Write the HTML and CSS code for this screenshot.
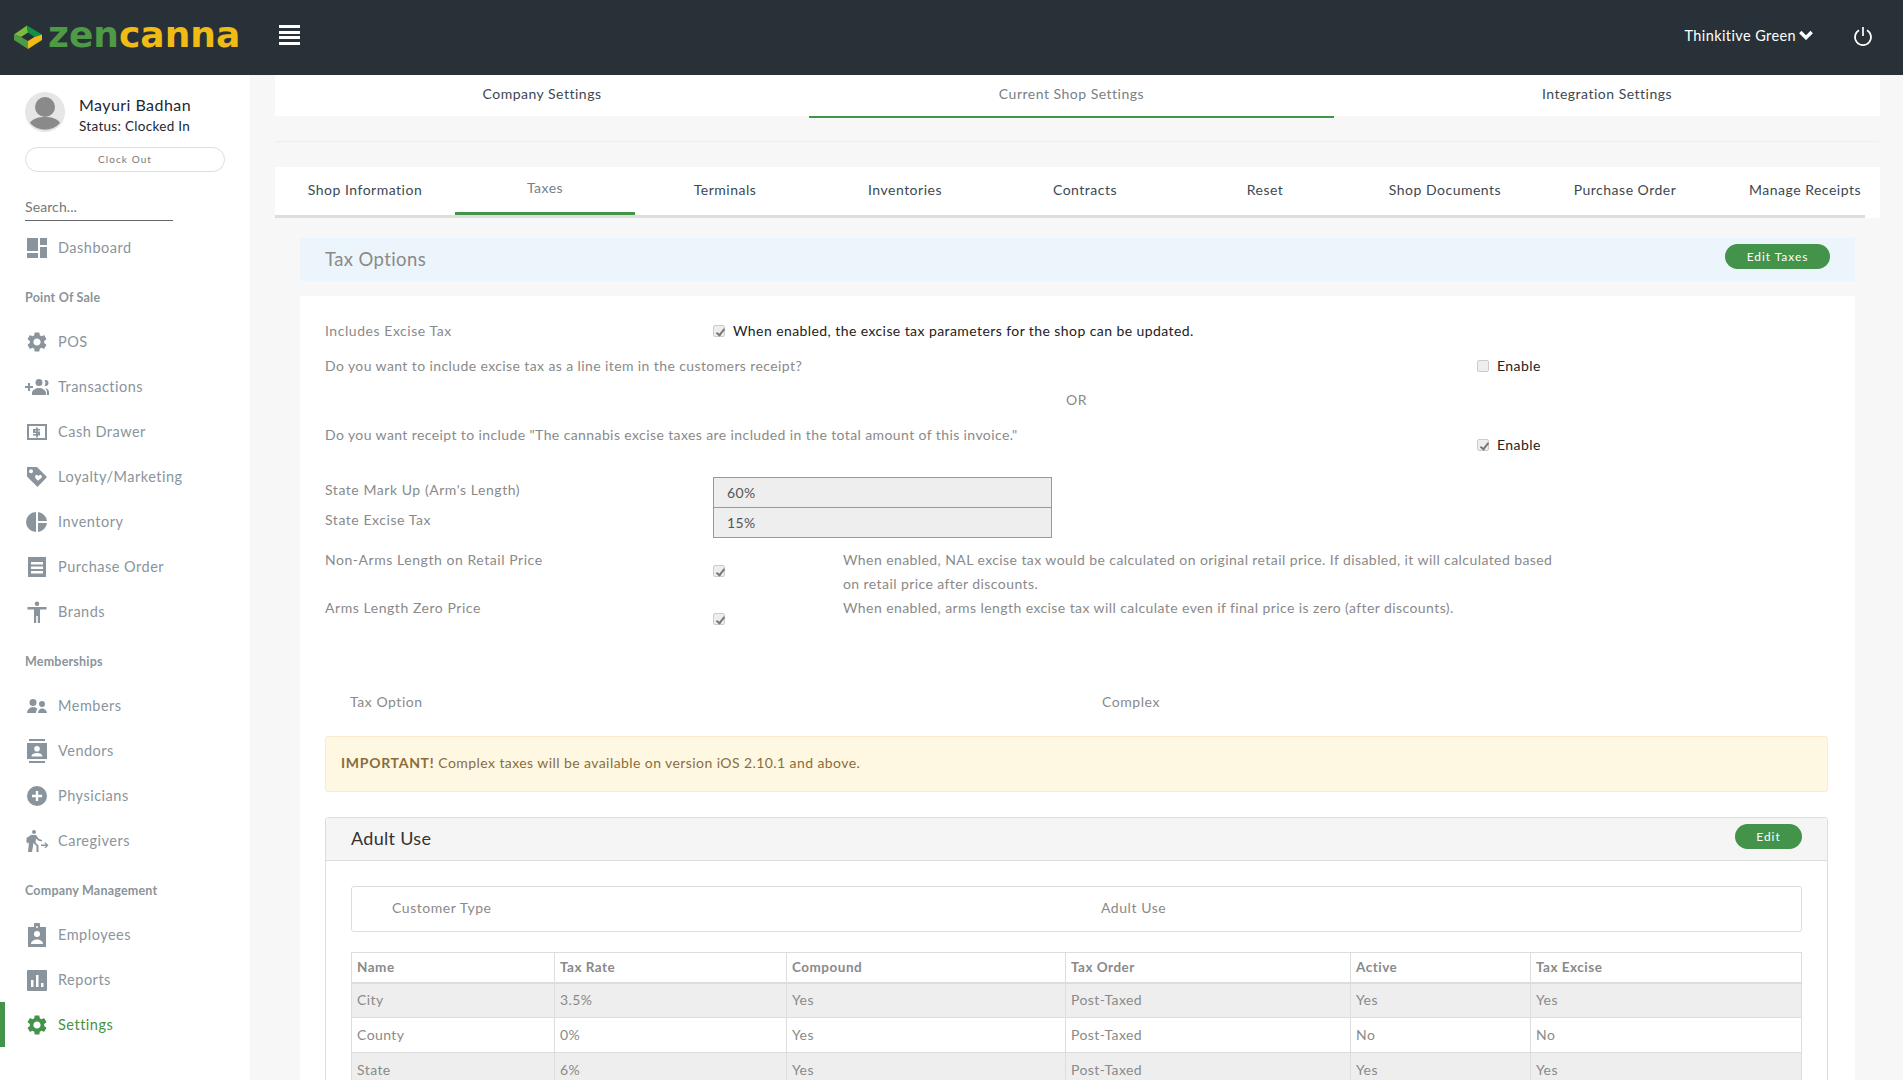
FILE: index.html
```html
<!DOCTYPE html>
<html lang="en">
<head>
<meta charset="utf-8">
<title>Zencanna - Tax Options</title>
<link rel="stylesheet" href="styles.css">
</head>
<body>
<header class="topbar">
  <div class="logo">
    <svg class="logo-mark" viewBox="0 0 28 24"><path fill="#7dbb3c" d="M0 9.500 13 .5 14 7.500 7 12z"/><path fill="#0f9148" d="M13 .5 28 9.500 20.500 12 14 7.500z"/><path fill="#efbc16" d="M28 9.500V15L14 24v-8l6.500-4z"/><path fill="#4f9a45" d="M0 9.500V15l14 9v-8l-7-4z"/></svg>
    <span class="logo-text"><span class="logo-zen">zen</span><span class="logo-canna">canna</span></span>
  </div>
  <div class="burger"><span></span><span></span><span></span><span></span></div>
  <div class="topbar-right">
    <span class="shop-name">Thinkitive Green</span>
    <svg class="chev" viewBox="0 0 14 10"><path d="M1.300 2 7 7.700 12.700 2" fill="none" stroke="#fff" stroke-width="3.400"/></svg>
    <svg class="power" viewBox="0 0 20 20"><path d="M6 4.200a8 8 0 1 0 8 0" fill="none" stroke="#fff" stroke-width="1.700"/><path d="M10 1v9" stroke="#fff" stroke-width="1.700"/></svg>
  </div>
</header>
<div class="shell">
  <aside class="sidebar">
    <div class="user">
      <svg class="avatar" viewBox="0 0 40 40"><circle cx="20" cy="20" r="20" fill="#e6e6e6"/><circle cx="20" cy="15" r="10" fill="#8a8a8a"/><path d="M5 31c3-5 9-6 15-6s12 1 15 6a20 20 0 0 1-30 0z" fill="#8a8a8a"/></svg>
      <div>
        <div class="user-name">Mayuri Badhan</div>
        <div class="user-status">Status: Clocked In</div>
      </div>
    </div>
    <button class="clock">Clock Out</button>
    <div class="search">Search...</div>
    <nav class="nav">
      <a class="nav-item"><svg class="ic" viewBox="0 0 24 24"><path d="M2 2h11v13H2zM15 2h7v7h-7zM15 11h7v11h-7zM2 17h11v5H2z"/></svg>Dashboard</a>
      <div class="nav-head">Point Of Sale</div>
      <a class="nav-item"><svg class="ic" viewBox="0 0 24 24"><path d="M19.14 12.94c.04-.3.06-.61.06-.94 0-.32-.02-.64-.07-.94l2.03-1.58c.18-.14.23-.41.12-.61l-1.92-3.32c-.12-.22-.37-.29-.59-.22l-2.39.96c-.5-.38-1.03-.7-1.62-.94l-.36-2.54c-.04-.24-.24-.41-.48-.41h-3.84c-.24 0-.43.17-.47.41l-.36 2.54c-.59.24-1.13.57-1.62.94l-2.39-.96c-.22-.08-.47 0-.59.22L2.74 8.87c-.12.21-.08.47.12.61l2.03 1.58c-.05.3-.09.63-.09.94s.02.64.07.94l-2.03 1.58c-.18.14-.23.41-.12.61l1.92 3.32c.12.22.37.29.59.22l2.39-.96c.5.38 1.03.7 1.62.94l.36 2.54c.05.24.24.41.48.41h3.84c.24 0 .44-.17.47-.41l.36-2.54c.59-.24 1.13-.56 1.62-.94l2.39.96c.22.08.47 0 .59-.22l1.92-3.32c.12-.22.07-.47-.12-.61l-2.01-1.58zM12 15.6c-1.98 0-3.6-1.62-3.6-3.6s1.62-3.6 3.6-3.6 3.6 1.62 3.6 3.6-1.62 3.6-3.6 3.6z"/></svg>POS</a>
      <a class="nav-item"><svg class="ic" viewBox="0 0 24 24"><path d="M0 11h3V8h2v3h3v2H5v3H3v-3H0zM14 4a3.500 3.500 0 1 1 0 7 3.500 3.500 0 0 1 0-7zM20.500 5a3 3 0 0 1 0 6l-1-.2a5 5 0 0 0 0-5.600zM7 18c0-3 4-5 7-5s7 2 7 5v2H7zM20 13c2 .3 4 1.800 4 4v3h-2v-3c0-1.500-1-3-2-4z"/></svg>Transactions</a>
      <a class="nav-item"><svg class="ic" viewBox="0 0 24 24"><path fill-rule="evenodd" d="M2 4h20v16H2zm2 2v12h16V6z"/><path d="M8 9h7v1.600h-5v1h5v4H8v-1.600h5v-1H8zM11 7.500h1.800v10H11z"/></svg>Cash Drawer</a>
      <a class="nav-item"><svg class="ic" viewBox="0 0 24 24"><path fill-rule="evenodd" d="M2 2h10l10 10-9.500 10L2 11.500zm4 2.300a2 2 0 1 0 0 4 2 2 0 0 0 0-4zM13 10.500c-1-1-3-.3-3 1.300 0 1 1 2 3 4 2-2 4-3 4-4 0-1.600-2-2.300-3-1.300l-.5.500z"/></svg>Loyalty/Marketing</a>
      <a class="nav-item"><svg class="ic" viewBox="0 0 24 24"><path d="M11 2v20a10 10 0 0 1 0-20zM13 2a10 10 0 0 1 9 9h-9zM13 13h9a10 10 0 0 1-9 9z"/></svg>Inventory</a>
      <a class="nav-item"><svg class="ic" viewBox="0 0 24 24"><path fill-rule="evenodd" d="M3 2h18v20H3zm3 5v2.500h12V7zm0 4.500V14h12v-2.500zm0 4.500v2.500h12V16z"/></svg>Purchase Order</a>
      <a class="nav-item"><svg class="ic" viewBox="0 0 24 24"><path d="M12 1.500a2.300 2.300 0 1 1 0 4.600 2.300 2.300 0 0 1 0-4.600zM2.500 7h19v2.500H15V23h-2.200v-7h-1.600v7H9V9.500H2.500z"/></svg>Brands</a>
      <div class="nav-head">Memberships</div>
      <a class="nav-item"><svg class="ic" viewBox="0 0 24 24"><path d="M8 5a3.500 3.500 0 1 1 0 7 3.500 3.500 0 0 1 0-7zM17 7a3 3 0 1 1 0 6 3 3 0 0 1 0-6zM2 19c0-3 3-6 6-6 2 0 3.500.8 4.500 2-1 1-1.500 2.500-1.500 4zM13 19c0-2.500 2-4.500 4-4.500s5 2 5 4.500z"/></svg>Members</a>
      <a class="nav-item"><svg class="ic" viewBox="0 0 24 24"><path d="M4 0h16v2H4zM4 22h16v2H4z"/><path fill-rule="evenodd" d="M2 4h20v16H2zm10 3a2.800 2.800 0 1 0 0 5.600A2.800 2.800 0 0 0 12 7zM6.500 17.500h11c0-2.500-3-3.500-5.500-3.500s-5.500 1-5.500 3.500z"/></svg>Vendors</a>
      <a class="nav-item"><svg class="ic" viewBox="0 0 24 24"><path fill-rule="evenodd" d="M12 2a10 10 0 1 1 0 20 10 10 0 0 1 0-20zm-1.200 5v3.800H7v2.400h3.800V17h2.400v-3.800H17v-2.400h-3.800V7z"/></svg>Physicians</a>
      <a class="nav-item"><svg class="ic" viewBox="0 0 24 24"><path d="M9 1a2 2 0 1 1 0 4 2 2 0 0 1 0-4zM6 6h5l3 4 3 1v1.600l-4-1-2-2-.5 4 3 3V23h-2v-6l-3-3-1.500 9H3l1-10-1 1.500-1.500-1V9zM16 15.500h5l-1.500-1.500 1-.8 3 3-3 3-1-.8 1.500-1.500h-5z"/></svg>Caregivers</a>
      <div class="nav-head">Company Management</div>
      <a class="nav-item"><svg class="ic" viewBox="0 0 24 24"><path fill-rule="evenodd" d="M3 4h6V2a3 3 0 0 1 6 0v2h6v20H3zm9 1a1 1 0 0 1 0-2 1 1 0 0 1 0 2zm0 3a3 3 0 1 0 0 6 3 3 0 0 0 0-6zM6 21h12c0-3-3-4.500-6-4.500S6 18 6 21z"/></svg>Employees</a>
      <a class="nav-item"><svg class="ic" viewBox="0 0 24 24"><path fill-rule="evenodd" d="M3 2h18a1 1 0 0 1 1 1v19a1 1 0 0 1-1 1H3a1 1 0 0 1-1-1V3a1 1 0 0 1 1-1zm3 10v7h2.500v-7zm5-5v12h2.500V7zm5 8v4h2.500v-4z"/></svg>Reports</a>
      <a class="nav-item is-active"><svg class="ic" viewBox="0 0 24 24"><path d="M19.14 12.94c.04-.3.06-.61.06-.94 0-.32-.02-.64-.07-.94l2.03-1.58c.18-.14.23-.41.12-.61l-1.92-3.32c-.12-.22-.37-.29-.59-.22l-2.39.96c-.5-.38-1.03-.7-1.62-.94l-.36-2.54c-.04-.24-.24-.41-.48-.41h-3.84c-.24 0-.43.17-.47.41l-.36 2.54c-.59.24-1.13.57-1.62.94l-2.39-.96c-.22-.08-.47 0-.59.22L2.74 8.87c-.12.21-.08.47.12.61l2.03 1.58c-.05.3-.09.63-.09.94s.02.64.07.94l-2.03 1.58c-.18.14-.23.41-.12.61l1.92 3.32c.12.22.37.29.59.22l2.39-.96c.5.38 1.03.7 1.62.94l.36 2.54c.05.24.24.41.48.41h3.84c.24 0 .44-.17.47-.41l.36-2.54c.59-.24 1.13-.56 1.62-.94l2.39.96c.22.08.47 0 .59-.22l1.92-3.32c.12-.22.07-.47-.12-.61l-2.01-1.58zM12 15.6c-1.98 0-3.6-1.62-3.6-3.6s1.62-3.6 3.6-3.6 3.6 1.62 3.6 3.6-1.62 3.6-3.6 3.6z"/></svg>Settings</a>
    </nav>
  </aside>
  <main class="main">
    <div class="top-tabs">
      <a class="top-tab">Company Settings</a>
      <a class="top-tab is-active">Current Shop Settings</a>
      <a class="top-tab">Integration Settings</a>
    </div>
    <hr class="divider">
    <div class="sub-wrap">
      <div class="sub-tabs">
        <a class="sub-tab">Shop Information</a>
        <a class="sub-tab is-active">Taxes</a>
        <a class="sub-tab">Terminals</a>
        <a class="sub-tab">Inventories</a>
        <a class="sub-tab">Contracts</a>
        <a class="sub-tab">Reset</a>
        <a class="sub-tab">Shop Documents</a>
        <a class="sub-tab">Purchase Order</a>
        <a class="sub-tab">Manage Receipts</a>
      </div>
    </div>
    <section class="section">
      <div class="section-head">
        <h2 class="section-title">Tax Options</h2>
        <button class="pill pill-wide">Edit Taxes</button>
      </div>
      <div class="card">
        <div class="row row-excise">
          <span class="lbl">Includes Excise Tax</span>
          <span class="check-line"><span class="cb is-on"></span><span class="dark">When enabled, the excise tax parameters for the shop can be updated.</span></span>
        </div>
        <div class="row row-q1">
          <span class="lbl">Do you want to include excise tax as a line item in the customers receipt?</span>
          <span class="enable"><span class="cb"></span><span class="dark-2">Enable</span></span>
        </div>
        <div class="or">OR</div>
        <div class="row row-q2">
          <span class="lbl">Do you want receipt to include "The cannabis excise taxes are included in the total amount of this invoice."</span>
          <span class="enable enable-low"><span class="cb is-on"></span><span class="dark-2">Enable</span></span>
        </div>
        <div class="row row-input">
          <span class="lbl">State Mark Up (Arm's Length)</span>
          <div class="fake-input">60%</div>
        </div>
        <div class="row row-input">
          <span class="lbl">State Excise Tax</span>
          <div class="fake-input">15%</div>
        </div>
        <div class="row row-desc row-nal">
          <span class="lbl">Non-Arms Length on Retail Price</span>
          <span class="cb-cell"><span class="cb is-on"></span></span>
          <p class="desc">When enabled, NAL excise tax would be calculated on original retail price. If disabled, it will calculated based on retail price after discounts.</p>
        </div>
        <div class="row row-desc">
          <span class="lbl">Arms Length Zero Price</span>
          <span class="cb-cell"><span class="cb is-on"></span></span>
          <p class="desc">When enabled, arms length excise tax will calculate even if final price is zero (after discounts).</p>
        </div>
        <div class="option-row">
          <span class="lbl">Tax Option</span>
          <span class="lbl">Complex</span>
        </div>
        <div class="alert"><strong class="alert-strong">IMPORTANT!</strong> Complex taxes will be available on version iOS 2.10.1 and above.</div>
        <div class="panel">
          <div class="panel-head">
            <h3 class="panel-title">Adult Use</h3>
            <button class="pill">Edit</button>
          </div>
          <div class="panel-body">
            <div class="type-box">
              <span class="lbl">Customer Type</span>
              <span class="lbl">Adult Use</span>
            </div>
            <table class="tax-table">
              <colgroup><col class="c1"><col class="c2"><col class="c3"><col class="c4"><col class="c5"><col class="c6"></colgroup>
              <thead><tr><th>Name</th><th>Tax Rate</th><th>Compound</th><th>Tax Order</th><th>Active</th><th>Tax Excise</th></tr></thead>
              <tbody>
                <tr><td>City</td><td>3.5%</td><td>Yes</td><td>Post-Taxed</td><td>Yes</td><td>Yes</td></tr>
                <tr><td>County</td><td>0%</td><td>Yes</td><td>Post-Taxed</td><td>No</td><td>No</td></tr>
                <tr><td>State</td><td>6%</td><td>Yes</td><td>Post-Taxed</td><td>Yes</td><td>Yes</td></tr>
              </tbody>
            </table>
          </div>
        </div>
      </div>
    </section>
  </main>
</div>
</body>
</html>
```

FILE: styles.css
```css
* { box-sizing: border-box; }
html, body { margin: 0; height: 100%; overflow: hidden; }
body { font-family: Lato, "Liberation Sans", sans-serif; font-size: 14px; color: #8a8a8a; background: #f7f7f7; letter-spacing: .42px; }

.topbar { height: 75px; background: #293138; display: flex; align-items: center; padding: 0 30px 0 14px; }
.logo { display: flex; align-items: center; width: 265px; }
.logo-mark { width: 28px; height: 24px; margin-right: 6px; margin-top: -1px; }
.logo-text { font-family: "DejaVu Sans", sans-serif; font-weight: 700; font-size: 36px; letter-spacing: 0; line-height: 1; margin-top: -6px; }
.logo-zen { color: #4f9a45; }
.logo-canna { color: #efbc16; }
.burger { display: flex; flex-direction: column; gap: 2.600px; width: 21px; margin-top: -5px; }
.burger span { display: block; height: 3px; background: #fff; }
.topbar-right { margin-left: auto; display: flex; align-items: center; color: #fff; margin-top: -5px; }
.shop-name { font-size: 14.500px; letter-spacing: .4px; }
.chev { width: 14px; height: 10px; margin-left: 3px; margin-right: 40px; }
.power { width: 20px; height: 20px; margin-top: 2px; }

.shell { display: grid; grid-template-columns: 250px 1fr; height: 1005px; }
.sidebar { background: #fff; padding: 17px 0 0; }
.user { display: flex; padding-left: 25px; gap: 14px; }
.avatar { width: 40px; height: 40px; flex: none; }
.user-name { font-size: 16px; color: #1c2733; line-height: 20px; margin-top: 3px; letter-spacing: .45px; }
.user-status { font-size: 13.500px; color: #1c2733; line-height: 20px; margin-top: 1px; letter-spacing: .3px; }
.clock { display: block; margin: 11px 0 0 25px; width: 200px; height: 25px; background: #fff; border: 1px solid #ddd; border-radius: 13px; font: 10px Lato, sans-serif; letter-spacing: 1.100px; color: #777; padding: 0 0 2px; }
.search { margin: 20px 0 0 25px; width: 148px; height: 29px; border-bottom: 1px solid #666; color: #777; font-size: 14px; line-height: 29px; letter-spacing: .1px; }

.nav { margin-top: 4px; }
.nav-item { display: flex; align-items: center; height: 45px; padding-left: 25px; color: #8a949c; font-size: 14.500px; letter-spacing: .5px; position: relative; }
.ic { width: 24px; height: 24px; fill: #8a949c; margin-right: 9px; flex: none; }
.nav-head { height: 20px; line-height: 20px; margin: 18px 0 11px 25px; font-size: 12.500px; font-weight: 700; color: #8a949c; letter-spacing: .2px; }
.nav-item.is-active { color: #43934a; }
.nav-item.is-active .ic { fill: #43934a; }
.nav-item.is-active::before { content: ""; position: absolute; left: 0; top: 0; bottom: 0; width: 5px; background: #43934a; }

.main { padding: 0 23px 0 25px; min-width: 0; overflow: hidden; }
.top-tabs { display: grid; grid-template-columns: 534px 525px 1fr; height: 41px; background: #fff; }
.top-tab { display: block; text-align: center; color: #3c4852; font-size: 14px; line-height: 37px; letter-spacing: .5px; }
.top-tab.is-active { border-bottom: 2px solid #43934a; height: 43px; color: #777f88; }
.divider { border: 0; border-top: 1px solid #eee; margin: 25px 2px 25px 0; }
.sub-wrap { background: #fff; height: 51px; }
.sub-tabs { display: flex; width: 1590px; height: 51px; overflow: hidden; border-bottom: 3px solid #ddd; }
.sub-tab { flex: 0 0 180px; text-align: center; color: #3c4852; font-size: 14px; line-height: 46px; letter-spacing: .5px; height: 48px; }
.sub-tab.is-active { line-height: 42px; border-bottom: 3px solid #43934a; color: #777f88; }

.section { margin: 20px 25px 0; }
.section-head { display: flex; align-items: center; justify-content: space-between; height: 43px; background: #edf5fc; padding: 0 25px; }
.section-title { margin: -2px 0 0; font-size: 18.500px; font-weight: 400; color: #8a8a8a; letter-spacing: .4px; }
.pill { border: 0; background: #43934a; color: #fff; border-radius: 13px; height: 25px; width: 67px; font: 12px Lato, sans-serif; letter-spacing: .95px; padding: 0; }
.pill-wide { width: 105px; margin-top: -6px; }
.card { background: #fff; margin-top: 15px; padding: 17px 27px 0 25px; height: 800px; }

.row { display: flex; align-items: flex-start; }
.lbl { color: #8a8a8a; letter-spacing: .55px; }
.row > .lbl { flex: none; width: 388px; }
.row-excise { height: 35px; line-height: 35px; }
.check-line { display: flex; align-items: center; height: 35px; }
.cb { display: inline-block; width: 12px; height: 12px; border: 1px solid #ccc; border-radius: 2px; background: #eee; flex: none; position: relative; }
.cb.is-on::after { content: ""; position: absolute; left: 3.500px; top: 1px; width: 3px; height: 7px; border: solid #777; border-width: 0 2px 2px 0; transform: rotate(38deg); }
.dark { color: #222; margin-left: 8px; }
.dark-2 { color: #222; margin-left: 8px; }
.row-q1 { height: 35px; line-height: 35px; }
.row-q1 > .lbl, .row-q2 > .lbl { width: 1152px; letter-spacing: .4px; }
.enable { display: flex; align-items: center; height: 35px; }
.enable-low { margin-top: 10px; }
.or { height: 34px; line-height: 34px; text-align: center; color: #8a8a8a; }
.row-q2 { height: 60px; line-height: 35px; }
.row-input { height: 30px; line-height: 26px; }
.fake-input { width: 339px; height: 31px; background: #eee; border: 1px solid #999; padding-left: 13px; line-height: 29px; color: #555; margin-bottom: -1px; }
.row-desc { line-height: 24px; height: 48px; }
.row-nal { margin-top: 11px; }
.row-desc + .row-desc { height: 24px; }
.cb-cell { width: 130px; flex: none; padding-top: 5px; display: flex; align-items: center; height: 24px; margin-top: 8px; }
.desc { margin: 0; width: 720px; }
.option-row { display: grid; grid-template-columns: 25px 752px 1fr; margin-top: 70px; height: 24px; line-height: 24px; }
.option-row .lbl:first-child { grid-column: 2; }
.alert { margin-top: 22px; height: 56px; line-height: 52px; background: #fef8e3; border: 1px solid #faebcc; border-radius: 3px; padding-left: 15px; color: #8a6d3b; }
.alert-strong { letter-spacing: .7px; }
.panel { margin-top: 25px; border: 1px solid #ddd; border-radius: 3px; height: 400px; }
.panel-head { display: flex; align-items: center; justify-content: space-between; height: 43px; background: #f5f5f5; border-bottom: 1px solid #ddd; padding: 0 25px 2px; }
.panel-title { margin: 0; font-size: 18px; font-weight: 400; color: #333; letter-spacing: .3px; }
.panel-head .pill { margin-top: -4px; }
.panel-body { padding: 25px 25px 0; }
.type-box { display: grid; grid-template-columns: 40px 709px 1fr; height: 46px; line-height: 42px; border: 1px solid #ddd; border-radius: 3px; background: #fff; }
.type-box .lbl:first-child { grid-column: 2; }
.tax-table { width: 100%; table-layout: fixed; border-collapse: collapse; margin-top: 20px; }
.c1 { width: 203px; } .c2 { width: 232px; } .c3 { width: 279px; } .c4 { width: 285px; } .c5 { width: 180px; }
.tax-table th, .tax-table td { border: 1px solid #ddd; padding: 0 5px; text-align: left; color: #8a8a8a; }
.tax-table th { height: 30px; font-weight: 700; font-size: 13.500px; letter-spacing: .5px; border-bottom-width: 2px; }
.tax-table td { height: 35px; padding-bottom: 2px; }
.tax-table tbody tr:nth-child(odd) td { background: #eee; }
```
